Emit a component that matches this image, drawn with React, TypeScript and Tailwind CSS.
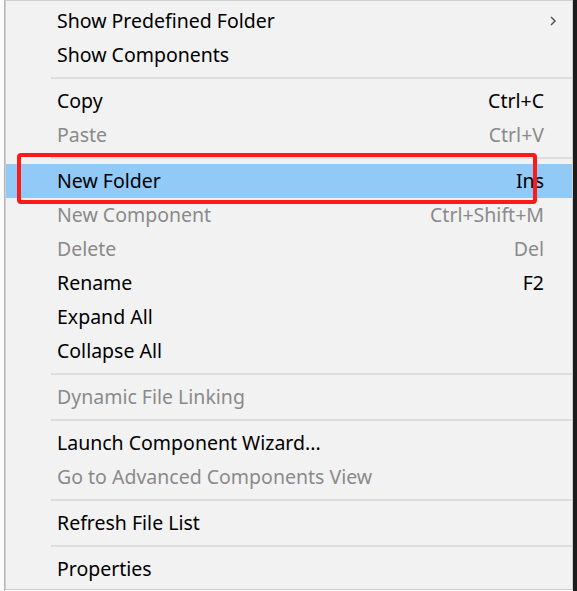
import React from 'react';

type Item =
  | { kind: 'item'; label: string; shortcut?: string; disabled?: boolean; submenu?: boolean; active?: boolean }
  | { kind: 'sep' };

const ITEMS: Item[] = [
  { kind: 'item', label: 'Show Predefined Folder', submenu: true },
  { kind: 'item', label: 'Show Components' },
  { kind: 'sep' },
  { kind: 'item', label: 'Copy', shortcut: 'Ctrl+C' },
  { kind: 'item', label: 'Paste', shortcut: 'Ctrl+V', disabled: true },
  { kind: 'sep' },
  { kind: 'item', label: 'New Folder', shortcut: 'Ins', active: true },
  { kind: 'item', label: 'New Component', shortcut: 'Ctrl+Shift+M', disabled: true },
  { kind: 'item', label: 'Delete', shortcut: 'Del', disabled: true },
  { kind: 'item', label: 'Rename', shortcut: 'F2' },
  { kind: 'item', label: 'Expand All' },
  { kind: 'item', label: 'Collapse All' },
  { kind: 'sep' },
  { kind: 'item', label: 'Dynamic File Linking', disabled: true },
  { kind: 'sep' },
  { kind: 'item', label: 'Launch Component Wizard...' },
  { kind: 'item', label: 'Go to Advanced Components View', disabled: true },
  { kind: 'sep' },
  { kind: 'item', label: 'Refresh File List' },
  { kind: 'sep' },
  { kind: 'item', label: 'Properties' },
];

function MenuRow({ item }: { item: Extract<Item, { kind: 'item' }> }) {
  const color = item.disabled ? 'text-[#8a8a8a]' : 'text-black';
  return (
    <div
      className={`relative flex h-[34px] items-center pl-[51px] pr-[28px] ${
        item.active ? 'bg-[#91c9f7]' : ''
      }`}
    >
      <span className={`flex-1 ${color}`}>{item.label}</span>
      {item.shortcut && <span className={color}>{item.shortcut}</span>}
      {item.submenu && (
        <svg className="absolute right-[15px] top-[11px]" width="8" height="12" viewBox="0 0 8 12">
          <path d="M2 2 L6 6 L2 10" fill="none" stroke="#555" strokeWidth="1.5" />
        </svg>
      )}
    </div>
  );
}

export default function App() {
  return (
    <div
      className="relative flex h-[591px] w-[577px] overflow-hidden bg-white text-[19.5px] leading-none"
      style={{ fontFamily: '"Noto Sans", "Open Sans", sans-serif' }}
    >
      {/* sliver of the window behind */}
      <div className="w-[5px] border-r border-[#b5b5b5] bg-[#fbfbfb]" />

      {/* context menu */}
      <div className="flex h-[590px] w-[568px] flex-col border border-[#cfcfcf] bg-[#f2f2f2] py-[3px]">
        {ITEMS.map((it, i) =>
          it.kind === 'sep' ? (
            <div key={i} className="flex h-[12px] items-center pl-[45px]">
              <div className="h-[2px] w-full bg-[#dddddd]" />
            </div>
          ) : (
            <MenuRow key={i} item={it} />
          )
        )}
      </div>

      {/* dark window edge on the right */}
      <div className="flex-1 bg-[#1c1c1c]" />

      {/* annotation box */}
      <div className="absolute left-[17px] top-[153px] h-[51px] w-[520px] rounded-[4px] border-[4px] border-[#ff1a1a]" />
    </div>
  );
}
